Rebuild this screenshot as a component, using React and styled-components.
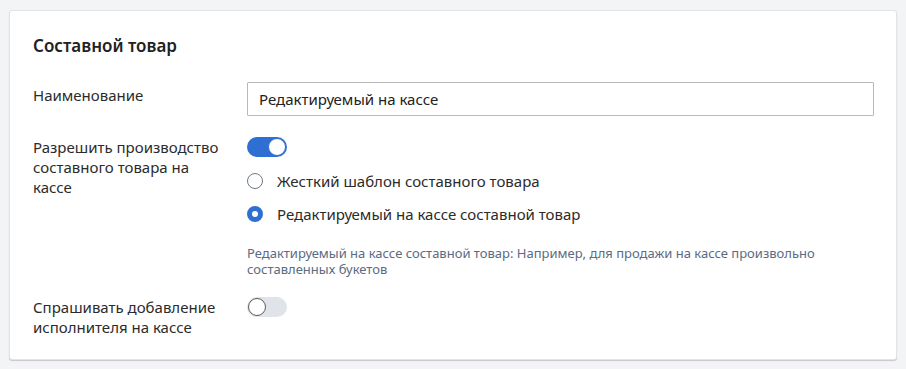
import React, { useState } from 'react';
import styled, { createGlobalStyle } from 'styled-components';

const GlobalStyle = createGlobalStyle`
    body {
        margin: 0;
        background: #f3f4f6;
        font-family: "Noto Sans", "Open Sans", sans-serif;
        color: #222;
    }
`;

const Page = styled.div`
    padding: 10px 9px 10px 9px;
`;

const Card = styled.section`
    background: #fff;
    border: 1px solid #e2e3e6;
    border-radius: 3px;
    box-shadow: 0 1px 1px rgba(0, 0, 0, 0.18);
    padding: 22px 22px 22px 23px;
`;

const Title = styled.h2`
    margin: 0 0 23px 0;
    font-size: 17px;
    font-weight: 600;
    line-height: 26px;
    color: #222;
`;

const Row = styled.div`
    display: grid;
    grid-template-columns: 214px 1fr;
    margin-bottom: ${p => p.$gap || 0}px;
`;

const Label = styled.div`
    font-size: 15px;
    line-height: 20px;
    padding-top: ${p => p.$top || 0}px;
    color: #2b2b2b;
    padding-right: 20px;
`;

const Field = styled.div`
    display: flex;
    flex-direction: column;
    align-items: flex-start;
`;

const Input = styled.input`
    box-sizing: border-box;
    width: 100%;
    height: 34px;
    border: 1px solid #b9b9b9;
    border-radius: 1px;
    padding: 0 11px;
    font: inherit;
    font-size: 15px;
    color: #222;
    outline: none;
`;

const Switch = styled.button`
    position: relative;
    width: 40px;
    height: 20px;
    border: none;
    border-radius: 10px;
    padding: 0;
    cursor: pointer;
    background: ${p => (p.$on ? '#2f6fd3' : '#e0e3e8')};

    &::after {
        content: '';
        position: absolute;
        top: 1px;
        left: ${p => (p.$on ? '21px' : '1px')};
        box-sizing: border-box;
        width: 18px;
        height: 18px;
        border-radius: 50%;
        background: #fff;
        border: 1.5px solid ${p => (p.$on ? '#2f6fd3' : '#5c5c5c')};
    }
`;

const Options = styled.div`
    display: flex;
    flex-direction: column;
    gap: 13px;
    margin-top: 14px;
`;

const Option = styled.label`
    display: flex;
    align-items: center;
    gap: 14px;
    font-size: 15px;
    line-height: 20px;
    color: #2b2b2b;
    cursor: pointer;
`;

const Radio = styled.span`
    box-sizing: border-box;
    width: 16px;
    height: 16px;
    border-radius: 50%;
    flex-shrink: 0;
    border: ${p => (p.$checked ? '5px solid #2f6fd3' : '1.5px solid #6f7a88')};
    background: #fff;
`;

const Hint = styled.p`
    margin: 21px 0 0 0;
    font-size: 13px;
    line-height: 16px;
    color: #5b6b82;
    max-width: 590px;
`;

const App = () => {
    const [allow, setAllow] = useState(true);
    const [ask, setAsk] = useState(false);
    const [mode, setMode] = useState('edit');

    return (
        <Page>
            <GlobalStyle />
            <Card>
                <Title>Составной товар</Title>

                <Row $gap={21}>
                    <Label $top={3}>Наименование</Label>
                    <Field>
                        <Input defaultValue="Редактируемый на кассе" />
                    </Field>
                </Row>

                <Row $gap={20}>
                    <Label>Разрешить производство составного товара на кассе</Label>
                    <Field>
                        <Switch $on={allow} onClick={() => setAllow(!allow)} />
                        <Options>
                            <Option onClick={() => setMode('hard')}>
                                <Radio $checked={mode === 'hard'} />
                                Жесткий шаблон составного товара
                            </Option>
                            <Option onClick={() => setMode('edit')}>
                                <Radio $checked={mode === 'edit'} />
                                Редактируемый на кассе составной товар
                            </Option>
                        </Options>
                        <Hint>
                            Редактируемый на кассе составной товар: Например, для продажи на кассе произвольно составленных букетов
                        </Hint>
                    </Field>
                </Row>

                <Row>
                    <Label>Спрашивать добавление исполнителя на кассе</Label>
                    <Field>
                        <Switch $on={ask} onClick={() => setAsk(!ask)} />
                    </Field>
                </Row>
            </Card>
        </Page>
    );
};

export default App;
